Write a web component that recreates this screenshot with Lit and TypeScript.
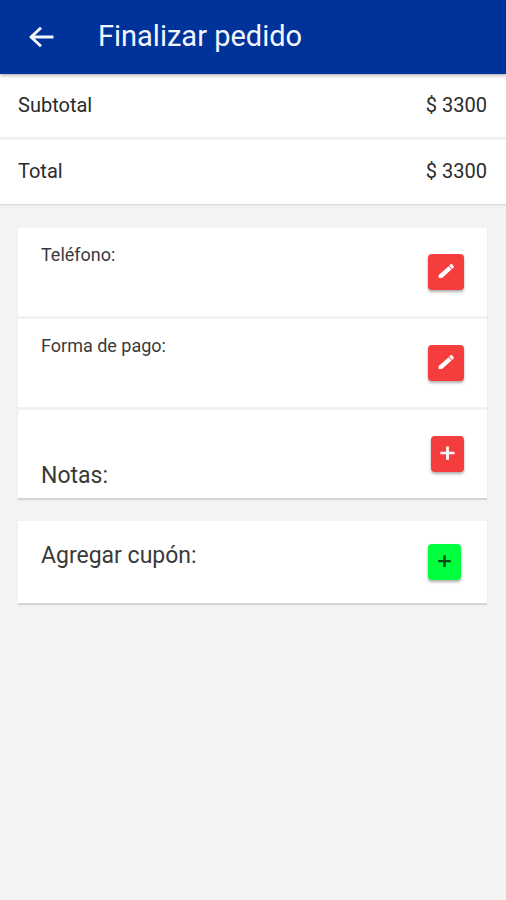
import { LitElement, html, css, svg } from "lit";
import { customElement, property } from "lit/decorators.js";

const icons = {
  back: svg`<path d="M22 12H4.4M12 4.6L4 12L12 19.4" fill="none" stroke="currentColor" stroke-width="2.4" stroke-linejoin="round"/>`,
  edit: svg`<path d="M3.2 16.8V20.4H7.2L18.6 10.2L15.2 6.2zM21 7.9a1.4 1.4 0 0 0 0-2L19.4 4a1.4 1.4 0 0 0-2 0L15.8 5.5L19.3 9.5z"/>`,
  add: svg`<path d="M22 13.8h-8v7.6h-4v-7.6H2v-3.4h8V2.8h4v7.6H22z"/>`,
};

@customElement("icon-button")
export class IconButton extends LitElement {
  @property() icon: keyof typeof icons = "add";
  @property() label = "";
  @property({ reflect: true }) tone = "danger";

  static styles = css`
    :host { display: block; }
    .button {
      display: flex;
      justify-content: center;
      align-items: flex-start;
      box-sizing: border-box;
      height: 36px;
      padding: 7px 8px;
      border: 0;
      border-radius: 4px;
      background: #f53d3d;
      color: #fff;
      box-shadow: 0 2px 3px rgba(0, 0, 0, 0.32);
      cursor: pointer;
    }
    :host([tone="success"]) .button { background: #00ff3c; color: #064d16; }
    .glyph { display: block; width: 20px; height: 20px; fill: currentColor; }
    .add { width: 17px; }
    :host([tone="success"]) .glyph { padding: 0 1px; width: 15px; }
  `;

  render() {
    return html`<button class="button" type="button" aria-label=${this.label}>
      <svg class="glyph ${this.icon}" viewBox="0 0 24 24" aria-hidden="true">${icons[this.icon]}</svg>
    </button>`;
  }
}

@customElement("app-root")
export class AppRoot extends LitElement {
  static styles = css`
    :host {
      display: block;
      min-height: 100vh;
      background: #f3f3f3;
      color: #2b2b2b;
      font-family: Roboto, "Liberation Sans", sans-serif;
    }
    .bar {
      position: relative;
      display: flex;
      align-items: center;
      gap: 42px;
      box-sizing: border-box;
      height: 74px;
      padding: 0 26px;
      background: #003399;
      color: #f4f6ff;
      box-shadow: 0 1px 4px rgba(0, 0, 0, 0.4);
    }
    .back {
      display: block;
      padding: 0;
      border: 0;
      background: none;
      color: inherit;
      cursor: pointer;
    }
    .arrow { display: block; width: 30px; height: 32px; }
    .title { margin: 0; padding-bottom: 2px; font-size: 29px; line-height: 36px; font-weight: 400; }
    .totals {
      margin: 0;
      background: #fff;
      border-bottom: 1px solid #dcdcdc;
      box-shadow: 0 1px 1px #e9e9e9;
    }
    .total {
      display: flex;
      justify-content: space-between;
      padding: 20px 19px 21px 18px;
      font-size: 20px;
      line-height: 22px;
    }
    .total + .total { border-top: 3px solid #f1f1f1; padding-bottom: 22px; }
    .amount { margin: 0; }
    .content { display: grid; gap: 23px; padding: 23px 19px 23px 18px; }
    .card {
      background: #fff;
      box-shadow: 0 2px 1px #d4d4d4;
    }
    .row {
      display: flex;
      justify-content: space-between;
      align-items: flex-start;
      box-sizing: border-box;
      min-height: 88px;
      padding: 8px 23px;
    }
    .row + .row { border-top: 3px solid #f2f2f2; min-height: 91px; }
    .action { margin-top: 18px; }
    .label { margin: 0; font-weight: 400; color: #3a3a3a; }
    .small { padding-top: 8px; font-size: 18px; line-height: 22px; }
    .large { font-size: 23px; line-height: 28px; }
    .notes .large { align-self: flex-end; }
    .coupon { min-height: 82px; padding: 5px 26px 8px 23px; }
    .coupon .large { padding-top: 16px; }
  `;

  private totals = [
    ["Subtotal", "$ 3300"],
    ["Total", "$ 3300"],
  ];

  render() {
    return html`
      <header class="bar">
        <button class="back" type="button" aria-label="Volver">
          <svg class="arrow" viewBox="0 0 24 24" aria-hidden="true">${icons.back}</svg>
        </button>
        <h1 class="title">Finalizar pedido</h1>
      </header>
      <main>
        <dl class="totals">
          ${this.totals.map(([name, amount]) => html`<div class="total"><dt>${name}</dt><dd class="amount">${amount}</dd></div>`)}
        </dl>
        <div class="content">
          <section class="card">
            <div class="row">
              <h2 class="label small">Teléfono:</h2>
              <icon-button class="action" icon="edit" label="Editar teléfono"></icon-button>
            </div>
            <div class="row">
              <h2 class="label small">Forma de pago:</h2>
              <icon-button class="action" icon="edit" label="Editar forma de pago"></icon-button>
            </div>
            <div class="row notes">
              <h2 class="label large">Notas:</h2>
              <icon-button class="action" icon="add" label="Agregar notas"></icon-button>
            </div>
          </section>
          <section class="card">
            <div class="row coupon">
              <h2 class="label large">Agregar cupón:</h2>
              <icon-button class="action" icon="add" tone="success" label="Agregar cupón"></icon-button>
            </div>
          </section>
        </div>
      </main>
    `;
  }
}
